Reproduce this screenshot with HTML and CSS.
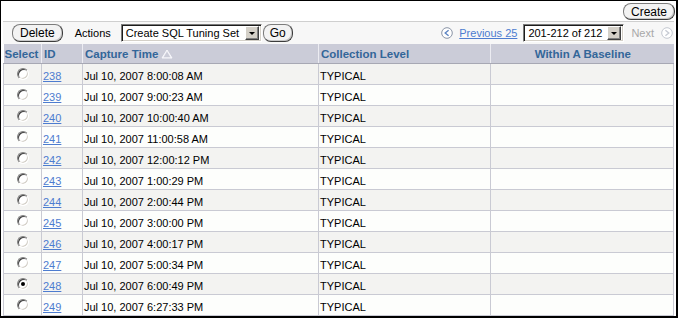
FILE: index.html
```html
<!DOCTYPE html>
<html lang="en">
<head>
    <meta name="viewport" content="width=device-width, initial-scale=1.0">
    <title>Snapshots</title>
    <link rel="stylesheet" href="styles.css">
</head>
<body>
    <div class="frame">
        <!-- top action -->
        <div class="top-bar">
            <button class="btn">Create</button>
        </div>

        <div class="panel">
            <!-- table controls -->
            <div class="toolbar">
                <div class="tool-left">
                    <button class="btn btn-delete">Delete</button>
                    <span class="label">Actions</span>
                    <div class="select select-actions">
                        <span class="select-text">Create SQL Tuning Set</span>
                        <span class="select-arrow"></span>
                    </div>
                    <button class="btn btn-go">Go</button>
                </div>
                <div class="tool-right">
                    <svg class="nav-icon" width="12" height="12" viewBox="0 0 12 12">
                        <circle cx="6" cy="6" r="5.3" fill="#fff" stroke="#8a94a6" stroke-width="1"/>
                        <path d="M7.6 3.2 L4.2 6 L7.6 8.8" fill="none" stroke="#5f86c4" stroke-width="1.4"/>
                    </svg>
                    <a href="#" class="link prev-link">Previous 25</a>
                    <div class="select select-range">
                        <span class="select-text">201-212 of 212</span>
                        <span class="select-arrow"></span>
                    </div>
                    <span class="next-disabled">Next</span>
                    <svg class="nav-icon" width="12" height="12" viewBox="0 0 12 12">
                        <circle cx="6" cy="6" r="5.3" fill="#fff" stroke="#c4c8d0" stroke-width="1"/>
                        <path d="M4.4 3.2 L7.8 6 L4.4 8.8" fill="none" stroke="#c8ccd4" stroke-width="1.4"/>
                    </svg>
                </div>
            </div>

            <table class="grid">
                <colgroup>
                    <col class="c-select">
                    <col class="c-id">
                    <col class="c-time">
                    <col class="c-level">
                    <col>
                </colgroup>
                <thead>
                    <tr>
                        <th>Select</th>
                        <th>ID</th>
                        <th>Capture Time
                            <svg class="sort-icon" width="12" height="10" viewBox="0 0 12 10">
                                <path d="M6 1 L11 9 L1 9 Z" fill="#f4f4f8" stroke="#f8f8fc" stroke-width="1"/>
                                <path d="M6 2.6 L9.4 8.2 L2.6 8.2 Z" fill="#cbccd8"/>
                            </svg>
                        </th>
                        <th>Collection Level</th>
                        <th class="center">Within A Baseline</th>
                    </tr>
                </thead>
                <tbody id="rows"></tbody>
            </table>
        </div>
    </div>

    <script>
        const snapshots = [
            [238, "Jul 10, 2007 8:00:08 AM"],
            [239, "Jul 10, 2007 9:00:23 AM"],
            [240, "Jul 10, 2007 10:00:40 AM"],
            [241, "Jul 10, 2007 11:00:58 AM"],
            [242, "Jul 10, 2007 12:00:12 PM"],
            [243, "Jul 10, 2007 1:00:29 PM"],
            [244, "Jul 10, 2007 2:00:44 PM"],
            [245, "Jul 10, 2007 3:00:00 PM"],
            [246, "Jul 10, 2007 4:00:17 PM"],
            [247, "Jul 10, 2007 5:00:34 PM"],
            [248, "Jul 10, 2007 6:00:49 PM"],
            [249, "Jul 10, 2007 6:27:33 PM"]
        ];
        const selectedId = 248;

        let html = "";
        snapshots.forEach(function (snap, i) {
            const rowClass = i % 2 === 0 ? "shade" : "plain";
            const radioClass = snap[0] === selectedId ? "radio checked" : "radio";
            html += `<tr class="${rowClass}">
                <td class="sel"><span class="${radioClass}"></span></td>
                <td><a href="#" class="link">${snap[0]}</a></td>
                <td>${snap[1]}</td>
                <td>TYPICAL</td>
                <td></td>
            </tr>`;
        });
        document.getElementById("rows").innerHTML = html;
    </script>
</body>
</html>
```

FILE: styles.css
```css
body {
    margin: 0;
    font-family: "Liberation Sans", Arial, sans-serif;
    font-size: 11px;
    color: #000;
    background-color: #fff;
}
.frame {
    box-sizing: border-box;
    width: 678px;
    height: 318px;
    border: 1px solid #000;
    border-right-width: 2px;
    border-bottom-width: 2px;
    padding: 0 2px;
    overflow: hidden;
}
.top-bar {
    height: 20px;
    display: flex;
    justify-content: flex-end;
    align-items: flex-start;
    padding-top: 2px;
    box-sizing: border-box;
    margin-right: -1px;
}
.btn {
    font-family: "Liberation Sans", Arial, sans-serif;
    font-size: 12px;
    color: #000;
    height: 17px;
    padding: 0 7px;
    line-height: 14px;
    border: 1px solid #7c7c7c;
    border-right-color: #3c3c3c;
    border-bottom-color: #3c3c3c;
    border-radius: 8px;
    background-color: #f3f3f3;
    box-shadow: inset -1px -1px 0 #c8c8c8;
    cursor: pointer;
}
.panel {
    border-top: 1px solid #cfcfcf;
}
.toolbar {
    height: 22px;
    display: flex;
    justify-content: space-between;
    align-items: center;
    background-color: #f7f7f7;
}
.tool-left,
.tool-right {
    display: flex;
    align-items: center;
}
.btn-delete {
    margin-left: 9px;
    height: 18px;
}
.btn-go {
    height: 18px;
    margin-left: 1px;
    padding: 0 6px;
}
.label {
    margin: 0 10px 0 12px;
}
.select {
    box-sizing: border-box;
    height: 18px;
    display: flex;
    align-items: center;
    background-color: #fff;
    border: 1px solid #fff;
    border-top-color: #7a7a7a;
    border-left-color: #7a7a7a;
    box-shadow: inset 1px 1px 0 #1c1c1c, inset -1px -1px 0 #d4d0c8;
    padding: 2px;
}
.select-text {
    flex: 1;
    padding-left: 2px;
    font-size: 11px;
    white-space: nowrap;
    overflow: hidden;
}
.select-actions {
    width: 141px;
}
.select-range {
    width: 101px;
    margin: 0 7px 0 6px;
}
.select-arrow {
    box-sizing: border-box;
    width: 14px;
    height: 14px;
    flex-shrink: 0;
    background-color: #d4d0c8;
    border: 1px solid #fff;
    border-right-color: #404040;
    border-bottom-color: #404040;
    box-shadow: inset -1px -1px 0 #808080;
    display: flex;
    align-items: center;
    justify-content: center;
}
.select-arrow::after {
    content: "";
    border-left: 3px solid transparent;
    border-right: 3px solid transparent;
    border-top: 3px solid #000;
    margin-top: 1px;
}
.nav-icon {
    display: block;
}
.prev-link {
    margin-left: 6px;
}
.next-disabled {
    color: #a8a8a8;
    margin-right: 7px;
}
.tool-right .nav-icon:last-child {
    margin-right: 1px;
}
.link {
    color: #4d7cd0;
    text-decoration: underline;
}
.grid {
    width: 100%;
    border-collapse: collapse;
    table-layout: fixed;
}
.c-select { width: 38px; }
.c-id { width: 41px; }
.c-time { width: 236px; }
.c-level { width: 172px; }
.grid th {
    height: 19px;
    padding: 0 1px 0 2px;
    background-color: #cbccd8;
    color: #336699;
    font-size: 11.5px;
    font-weight: bold;
    text-align: left;
    white-space: nowrap;
    border-left: 1px solid #ececf2;
    border-bottom: 1px solid #a7a8b4;
}
.grid th:first-child {
    border-left: none;
    padding-left: 1px;
}
.grid th.center {
    text-align: center;
}
.sort-icon {
    vertical-align: -1px;
}
.grid td {
    height: 21px;
    padding: 4px 2px 0 1px;
    box-sizing: border-box;
    border: 1px solid #c9cad3;
    border-top: none;
    white-space: nowrap;
}
.grid tr.shade td {
    background-color: #f3f3f1;
}
.grid tr.plain td {
    background-color: #fdfefc;
}
.grid td.sel {
    text-align: center;
    vertical-align: top;
    padding: 4px 0 0 1px;
}
.radio {
    display: inline-block;
    box-sizing: border-box;
    width: 12px;
    height: 12px;
    border-radius: 50%;
    border: 1px solid;
    border-color: #808080 #fff #fff #808080;
    box-shadow: inset 1px 1px 0 #404040, inset -1px -1px 0 #d4d0c8;
    background-color: #fff;
    position: relative;
}
.radio.checked::after {
    content: "";
    position: absolute;
    left: 3px;
    top: 3px;
    width: 4px;
    height: 4px;
    border-radius: 50%;
    background-color: #000;
}
```
